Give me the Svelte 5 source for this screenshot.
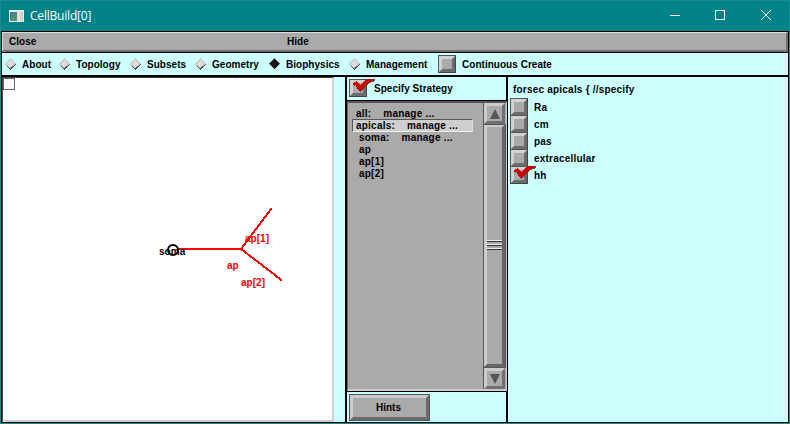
<script>
  const tabs = [
    { label: 'About', w: 54 },
    { label: 'Topology', w: 71 },
    { label: 'Subsets', w: 65 },
    { label: 'Geometry', w: 74 },
    { label: 'Biophysics', w: 80, on: true },
    { label: 'Management', w: 90 }
  ];
  const rows = [
    { text: 'all:    manage ...', pad: 3 },
    { text: 'apicals:    manage ...', pad: 3, selected: true },
    { text: 'soma:    manage ...', pad: 6 },
    { text: 'ap', pad: 6 },
    { text: 'ap[1]', pad: 6 },
    { text: 'ap[2]', pad: 6 }
  ];
  const mechanisms = [
    { label: 'Ra', h: 17 },
    { label: 'cm', h: 17 },
    { label: 'pas', h: 17 },
    { label: 'extracellular', h: 17 },
    { label: 'hh', h: 18, on: true }
  ];
</script>

{#snippet box(checked)}
  <span class="box">
    <i></i>
    {#if checked}
      <svg class="tick" width="26" height="14" viewBox="0 0 26 14" shape-rendering="crispEdges">
        <path d="M5 5L8 3L11 7L14 4L19 1L26 0V2L21 4L17 7L13 12L11 13L9 11L7 6L5 7Z" fill="#555" />
        <path d="M4 4L8 2L11 6L14 3L19 0L25 0V1L21 3L17 6L13 11L10 12L8 10L7 6L4 6Z" fill="#cd0000" />
      </svg>
    {/if}
  </span>
{/snippet}

<div class="window">
  <header>
    <svg class="app" width="15" height="12" viewBox="0 0 15 12" shape-rendering="crispEdges">
      <defs>
        <linearGradient id="pane" x2="0.3" y2="1">
          <stop offset="0" stop-color="#477aa0" /><stop offset="1" stop-color="#4f9964" />
        </linearGradient>
      </defs>
      <rect width="15" height="12" fill="#e9e9e9" />
      <rect x="1" y="2" width="7" height="9" fill="url(#pane)" />
      <rect x="8" y="2" width="2" height="9" fill="#dcdcdc" />
      <rect x="11" y="2" width="3" height="9" fill="#d0d0d0" />
    </svg>
    <span class="title">CellBuild[0]</span>
    <svg class="controls" width="110" height="12" viewBox="0 0 110 12" fill="none" stroke="#fff">
      <path d="M0 5.5H10M45.5 .5h9v9h-9zM91 0L101 10M101 0L91 10" />
    </svg>
  </header>
  <div class="frame">
    <div class="menu"><span class="close">Close</span><span>Hide</span></div>
    <nav>
      {#each tabs as tab}
        <span class="tab" style:width="{tab.w}px">
          <svg width="12" height="12" viewBox="0 0 12 12" shape-rendering="crispEdges">
            {#if tab.on}
              <path d="M6 0L12 6L6 12L0 6Z" fill="#c8d4d4" />
              <path d="M0 6L6 0L12 6Z" fill="#555" />
              <path d="M6 1L11 6L6 11L1 6Z" fill="#161616" />
            {:else}
              <path d="M6 0L12 6L6 12L0 6Z" fill="#505050" />
              <path d="M0 6L6 0L12 6L6 10Z" fill="#c8c8c8" />
              <path d="M2 6L6 2L10 6L6 9Z" fill="#dedede" />
            {/if}
          </svg>
          <b>{tab.label}</b>
        </span>
      {/each}
      {@render box(false)}
      <span class="continuous">Continuous Create</span>
    </nav>
    <main>
      <section class="canvas">
        <span class="handle"></span>
        <svg width="330" height="342" viewBox="3 78 330 342">
          <g fill="none" stroke="#f00" stroke-width="2" shape-rendering="crispEdges">
            <path d="M178 249H241L271.500 208.500M241 249L282 280.500" />
          </g>
          <text x="159" y="255">soma</text>
          <g fill="#f00">
            <text x="227" y="269">ap</text>
            <text x="245" y="242">ap[1]</text>
            <text x="241" y="286">ap[2]</text>
          </g>
          <circle cx="173" cy="250" r="5" fill="none" stroke="#000" stroke-width="2" />
        </svg>
      </section>
      <section class="middle">
        <div class="strategy">{@render box(true)}<span class="label">Specify Strategy</span></div>
        <div class="browser">
          <div class="rows">
            {#each rows as row}
              <div class="row" class:selected={row.selected} style:padding-left="{row.pad}px">{row.text}</div>
            {/each}
          </div>
          <div class="scroll">
            <div class="arrow"><svg width="10" height="10"><path d="M5 0L10 10H0Z" fill="#555" /></svg></div>
            <div class="thumb"><div class="grip"></div><div class="grip"></div><div class="grip"></div></div>
            <div class="arrow"><svg width="10" height="10"><path d="M0 0H10L5 10Z" fill="#555" /></svg></div>
          </div>
        </div>
        <div class="foot"><div class="hints">Hints</div></div>
      </section>
      <section class="right">
        <div class="code">forsec apicals {'{'} //specify</div>
        {#each mechanisms as m}
          <div class="mech" style:height="{m.h}px">{@render box(m.on)}<span class="label">{m.label}</span></div>
        {/each}
      </section>
    </main>
  </div>
</div>

<style>
  .window, .window :global(*) { box-sizing: border-box; }
  .window {
    width: 790px; height: 424px; background: #028387;
    border: 1px solid #1c8c90; display: flex; flex-direction: column;
    font: bold 10px/12px "Liberation Sans", Arial, sans-serif; color: #000;
    letter-spacing: 0.03px; overflow: hidden;
  }
  header { height: 30px; flex: none; display: flex; align-items: center; padding-left: 8px; }
  .title {
    margin-left: 6px; width: 633px; font: 12px/16px "Open Sans", "Noto Sans", sans-serif;
    color: #fff; letter-spacing: -0.2px;
  }
  .app { margin-bottom: 1px; }
  .controls { flex: none; margin: 0 0 0 7px; }
  .frame { flex: 1; min-height: 0; border: 1px solid #000; display: flex; flex-direction: column; background: #cdffff; }
  .menu {
    height: 20px; flex: none; background: #aaa; display: flex; align-items: center;
    border-top: 1px solid #ddd; border-left: 1px solid #ddd;
    border-right: 2px solid #707070; border-bottom: 2px solid #707070; padding-left: 6px;
  }
  .close { width: 278px; }
  nav { height: 25px; flex: none; border-top: 1px solid #000; border-bottom: 2px solid #000; display: flex; align-items: center; padding: 1px 0 0 2px; }
  nav .box { margin-bottom: 2px; }
  .tab { display: flex; align-items: center; flex: none; }
  .tab svg { flex: none; margin: 0 6px 1px 0; }
  .continuous { margin-left: 6px; }
  .box {
    position: relative; flex: none; width: 18px; height: 18px; background: #aaa;
    border: 1px solid; border-color: #555 #444 #444 #555;
  }
  .box i {
    display: block; height: 100%; border: 3px solid;
    border-color: #d2d2d2 #6c6c6c #6c6c6c #d2d2d2;
  }
  .tick { position: absolute; left: -1px; top: -1px; }
  main { flex: 1; min-height: 0; display: flex; }
  .canvas {
    position: relative; width: 332px; height: 345px; flex: none; background: #fff;
    border: 1px solid #444; border-right: 2px solid #cfcfcf; border-bottom: 2px solid #cfcfcf;
  }
  .canvas svg { display: block; }
  .handle { position: absolute; left: 0; top: 0; width: 12px; height: 12px; border: 1px solid #666; }
  .middle { width: 163px; flex: none; margin-left: 11px; border-left: 2px solid #000; border-right: 2px solid #000; display: flex; flex-direction: column; }
  .strategy { height: 24px; flex: none; border-bottom: 1px solid #000; display: flex; align-items: center; padding-left: 2px; }
  .strategy .box { margin-bottom: 1px; }
  .label { margin-left: 7px; }
  .browser {
    height: 290px; flex: none; background: #aaa; display: flex;
    border-top: 2px solid #555; border-left: 1px solid #666; border-right: 1px solid #ccc; border-bottom: 2px solid #ccc;
    margin-right: -1px;
  }
  .rows { width: 135px; padding: 5px 0 0 5px; letter-spacing: 0.22px; }
  .row { height: 12px; line-height: 12px; width: 121px; white-space: pre; }
  .row.selected {
    background: #cfcfcf; height: 13px; margin: -1px 0 0 -1px;
    border: 1px solid; border-color: #555 #ddd #eee #555; line-height: 12px;
  }
  .scroll { width: 22px; border-left: 1px solid #555; display: flex; flex-direction: column; }
  .arrow { height: 21px; flex: none; display: flex; align-items: center; justify-content: center; border: 3px solid; border-color: #ccc #707070 #707070 #ccc; }
  .thumb {
    flex: 1; margin: 1px 0; border: 3px solid; border-color: #ccc #666 #666 #ccc; border-top-width: 2px;
    display: flex; flex-direction: column; justify-content: center; gap: 2px; outline: 1px solid #555;
    padding-bottom: 2px;
  }
  .grip { height: 2px; flex: none; border-top: 1px solid #eee; border-bottom: 1px solid #333; }
  .foot { flex: 1; border-top: 1px solid #000; padding: 2px; }
  .hints {
    width: 81px; height: 27px; background: #aaa; outline: 1px solid #555; outline-offset: -1px;
    border: 4px solid; border-color: #ccc #6c6c6c #6c6c6c #ccc; text-align: center; line-height: 20px;
    padding-right: 2px;
  }
  .right { padding: 7px 0 0 2px; letter-spacing: 0.21px; }
  .code { height: 14px; padding-left: 3px; }
  .mech { display: flex; align-items: center; }
  .mech .label { margin: 2px 0 0 6px; }
</style>
